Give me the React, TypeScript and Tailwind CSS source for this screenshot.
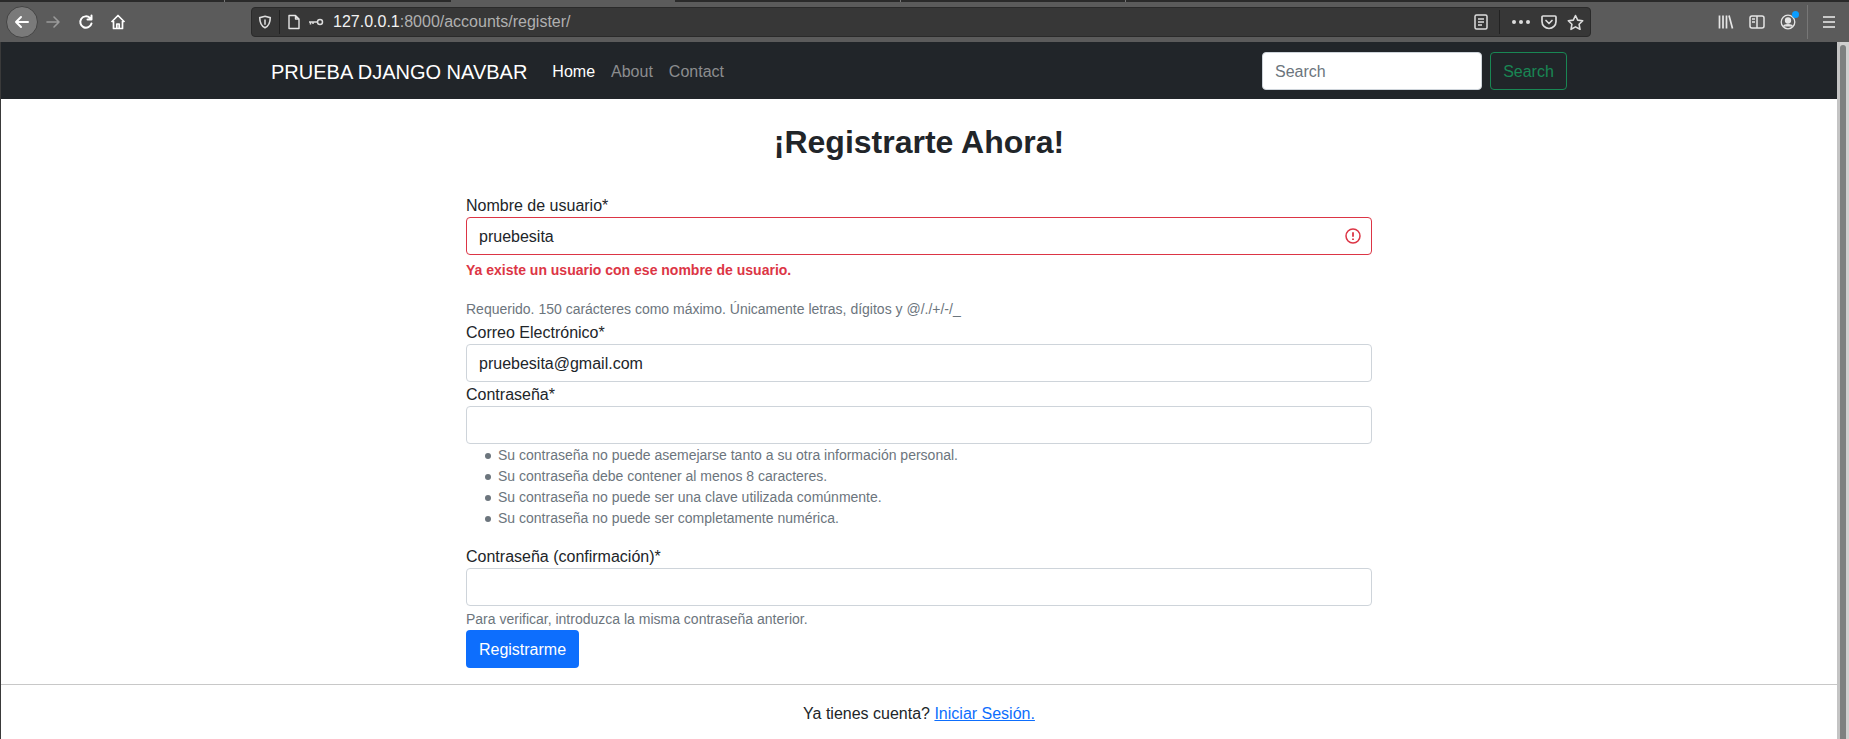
import React from 'react';

const sans = 'font-["Liberation_Sans",Arial,sans-serif]';

const Toolbar = () => (
  <div className="flex h-[42px] shrink-0 flex-col bg-[#5b5b5b]">
    <div className="flex h-[2px] bg-[#2a2a2a]">
      <div className="ml-[224px] h-full w-px bg-[#777]" />
      <div className="ml-[226px] h-full w-[224px] bg-[#5b5b5b]" />
      <div className="ml-[225px] h-full w-px bg-[#777]" />
      <div className="ml-[224px] h-full w-px bg-[#777]" />
    </div>
    <div className="flex flex-1 items-center">
      <div className="ml-[6px] flex h-[32px] w-[32px] items-center justify-center rounded-full border border-[#444] bg-[#7a7a7a]">
        <svg width="16" height="16" viewBox="0 0 16 16" fill="none" stroke="#fff" strokeWidth="2" strokeLinecap="round" strokeLinejoin="round">
          <path d="M14 8H2M7 3 2 8l5 5" />
        </svg>
      </div>
      <svg className="ml-[7px]" width="16" height="16" viewBox="0 0 16 16" fill="none" stroke="#9a9a9a" strokeWidth="1.6" strokeLinecap="round" strokeLinejoin="round">
        <path d="M2 8h12M9 3l5 5-5 5" />
      </svg>
      <svg className="ml-[17px]" width="16" height="16" viewBox="0 0 16 16" fill="none" stroke="#fff" strokeWidth="2" strokeLinecap="round" strokeLinejoin="round">
        <path d="M13.5 9.5A5.7 5.7 0 1 1 12 4l1.5 1.5M13.5 1.5v4h-4" />
      </svg>
      <svg className="ml-[16px]" width="16" height="16" viewBox="0 0 16 16" fill="none" stroke="#fff" strokeWidth="1.7" strokeLinejoin="round">
        <path d="M1.5 8 8 1.5 14.500 8M3.500 7v7.500h9V7M6.800 14.500V10h2.400v4.500" />
      </svg>
      <div className="ml-[125px] flex h-[30px] w-[1340px] items-center rounded-[4px] border border-[#2a2a2a] bg-[#373737]">
        <svg className="ml-[6px]" width="14" height="14" viewBox="0 0 16 16" fill="none" stroke="#ddd" strokeWidth="1.8">
          <path d="M8 1.500 14 3c0 6-2 9.500-6 11.500C4 12.500 2 9 2 3z" />
          <path d="M8 5v6" />
        </svg>
        <div className="ml-[7px] h-[24px] w-px bg-[#222]" />
        <svg className="ml-[7px]" width="14" height="16" viewBox="0 0 14 16" fill="none" stroke="#e5e5e5" strokeWidth="1.4" strokeLinejoin="round">
          <path d="M2 1.500h6.500L12 5v9.500H2zM8.500 1.500V5H12" />
        </svg>
        <svg className="ml-[7px]" width="16" height="10" viewBox="0 0 16 10" fill="none" stroke="#ddd" strokeWidth="1.5">
          <circle cx="12" cy="5" r="2.500" />
          <path d="M9.500 5H1M2.500 5v2.500M5 5v2" />
        </svg>
        <span className={`ml-[9px] text-[16px] text-[#f2f2f2] ${sans}`}>
          127.0.0.1<span className="text-[#b0b0b0]">:8000/accounts/register/</span>
        </span>
        <div className="ml-auto flex items-center">
          <svg width="14" height="16" viewBox="0 0 14 16" fill="none" stroke="#ddd" strokeWidth="1.500">
            <rect x="1" y="1" width="12" height="14" rx="1.500" />
            <path d="M4 5h6M4 8h6M4 11h4" />
          </svg>
          <div className="ml-[11px] h-[24px] w-px bg-[#222]" />
          <div className="ml-[12px] flex gap-[3px]">
            <div className="h-[4px] w-[4px] rounded-full bg-[#ddd]" />
            <div className="h-[4px] w-[4px] rounded-full bg-[#ddd]" />
            <div className="h-[4px] w-[4px] rounded-full bg-[#ddd]" />
          </div>
          <svg className="ml-[11px]" width="16" height="16" viewBox="0 0 16 16" fill="none" stroke="#ddd" strokeWidth="1.700" strokeLinecap="round" strokeLinejoin="round">
            <path d="M2 2h12c.5 0 1 .5 1 1v4.500a7 7 0 0 1-14 0V3c0-.5.5-1 1-1zM5 6.500l3 3 3-3" />
          </svg>
          <svg className="ml-[10px] mr-[6px]" width="17" height="17" viewBox="0 0 17 17" fill="none" stroke="#ddd" strokeWidth="1.600" strokeLinejoin="round">
            <path d="m8.500 1.500 2.200 4.600 5 .7-3.600 3.500.9 5-4.500-2.400L4 15.300l.9-5L1.300 6.800l5-.7z" />
          </svg>
        </div>
      </div>
      <svg className="ml-[127px]" width="16" height="16" viewBox="0 0 16 16" fill="none" stroke="#e5e5e5" strokeWidth="1.700">
        <path d="M1.500 1.500v13M5 1.500v13M8.500 1.500v13M11 1.500l3.500 13" />
      </svg>
      <svg className="ml-[15px]" width="16" height="16" viewBox="0 0 16 16" fill="none" stroke="#e5e5e5" strokeWidth="1.500">
        <rect x="1" y="2" width="14" height="12" rx="2" />
        <path d="M8 2v12M3 5h3M3 8h3" />
      </svg>
      <div className="relative ml-[15px]">
        <svg width="16" height="16" viewBox="0 0 16 16" fill="none" stroke="#e5e5e5" strokeWidth="1.300">
          <circle cx="8" cy="8" r="6.800" />
          <circle cx="8" cy="6.500" r="2.500" fill="#e5e5e5" />
          <path d="M3.500 12.500c1-2.500 8-2.500 9 0" fill="#e5e5e5" />
        </svg>
        <div className="absolute right-[-3px] top-[-3px] h-[7px] w-[7px] rounded-full bg-[#0a9dff]" />
      </div>
      <div className="ml-[11px] h-[34px] w-px bg-[#777]" />
      <svg className="ml-[14px]" width="14" height="14" viewBox="0 0 14 14" fill="none" stroke="#eee" strokeWidth="1.700">
        <path d="M1 2h12M1 7h12M1 12h12" />
      </svg>
    </div>
  </div>
);

const Navbar = () => (
  <nav className={`flex h-[57px] shrink-0 items-center bg-[#212529] pl-[270px] pr-[270px] pt-px ${sans}`}>
    <a className="pt-px text-[20px] text-white">PRUEBA DJANGO NAVBAR</a>
    <a className="ml-[25px] pt-px text-white">Home</a>
    <a className="ml-[16px] pt-px text-[#8c8d8f]">About</a>
    <a className="ml-[16px] pt-px text-[#8c8d8f]">Contact</a>
    <input placeholder="Search" className="ml-auto h-[38px] w-[220px] rounded-[4px] border border-[#ced4da] bg-white px-[12px] pt-[2px] text-black placeholder:text-[#6c757d]" />
    <button className="ml-[8px] h-[38px] w-[77px] rounded-[4px] border border-[#198754] pt-[2px] text-[#198754]">Search</button>
  </nav>
);

const Label = ({ children }: { children: React.ReactNode }) => (
  <label className="block h-[24px] pt-px text-[16px] leading-[24px] text-[#212529]">{children}</label>
);

const Field = ({ value, invalid }: { value?: string; invalid?: boolean }) => (
  <div className="relative">
    <input
      readOnly
      value={value ?? ''}
      className={`block h-[38px] w-full rounded-[4px] border bg-white px-[12px] pt-[2px] text-[16px] text-[#212529] ${invalid ? 'border-[#dc3545]' : 'border-[#ced4da]'}`}
    />
    {invalid && (
      <svg className="absolute right-[10px] top-[10px]" width="18" height="18" viewBox="0 0 18 18" fill="none" stroke="#dc3545" strokeWidth="1.500">
        <circle cx="9" cy="9" r="7" />
        <path d="M9 5.200v4.600M9 11.500v1.500" strokeWidth="1.800" />
      </svg>
    )}
  </div>
);

const passwordRules = [
  'Su contraseña no puede asemejarse tanto a su otra información personal.',
  'Su contraseña debe contener al menos 8 caracteres.',
  'Su contraseña no puede ser una clave utilizada comúnmente.',
  'Su contraseña no puede ser completamente numérica.',
];

export default function App() {
  return (
    <div className={`flex h-[739px] w-[1849px] flex-col overflow-hidden bg-white ${sans}`}>
      <Toolbar />
      <div className="flex min-h-0 flex-1">
        <div className="w-px bg-[#3a3a3a]" />
        <div className="flex min-w-0 flex-1 flex-col">
          <Navbar />
          <main className="flex flex-1 flex-col">
            <h2 className="mt-[24px] text-center text-[32px] font-bold leading-[38px] text-[#212529]">¡Registrarte Ahora!</h2>
            <form className="ml-[465px] mt-[32px] w-[906px]">
              <Label>Nombre de usuario*</Label>
              <Field value="pruebesita" invalid />
              <p className="mt-[5px] text-[14px] font-bold leading-[21px] text-[#dc3545]">Ya existe un usuario con ese nombre de usuario.</p>
              <p className="mt-[18px] text-[14px] leading-[21px] text-[#6c757d]">Requerido. 150 carácteres como máximo. Únicamente letras, dígitos y @/./+/-/_</p>
              <Label>Correo Electrónico*</Label>
              <Field value="pruebesita@gmail.com" />
              <Label>Contraseña*</Label>
              <Field />
              <ul className="mb-[15px] mt-px pl-[19px] text-[14px] leading-[21px] text-[#6c757d]">
                {passwordRules.map((rule) => (
                  <li key={rule} className="flex items-center">
                    <span className="mr-[7px] h-[6px] w-[6px] rounded-full bg-[#6c757d]" />
                    {rule}
                  </li>
                ))}
              </ul>
              <Label>Contraseña (confirmación)*</Label>
              <Field />
              <p className="mt-[3px] text-[14px] leading-[21px] text-[#6c757d]">Para verificar, introduzca la misma contraseña anterior.</p>
              <button type="button" className="block h-[38px] w-[113px] rounded-[4px] bg-[#0d6efd] pt-[2px] text-[16px] text-white">Registrarme</button>
            </form>
            <hr className="mt-[16px] border-t border-[#c8c8c8]" />
            <p className="mt-[17px] text-center text-[16px] leading-[24px] text-[#212529]">
              Ya tienes cuenta? <a className="text-[#0d6efd] underline">Iniciar Sesión.</a>
            </p>
          </main>
        </div>
        <div className="flex w-[12px] border-l-[3px] border-[#c4c4c4] bg-[#d0d0d0] pt-[3px]">
          <div className="h-full w-[6px] rounded-t-full bg-[#7d8080]" />
        </div>
      </div>
    </div>
  );
}
